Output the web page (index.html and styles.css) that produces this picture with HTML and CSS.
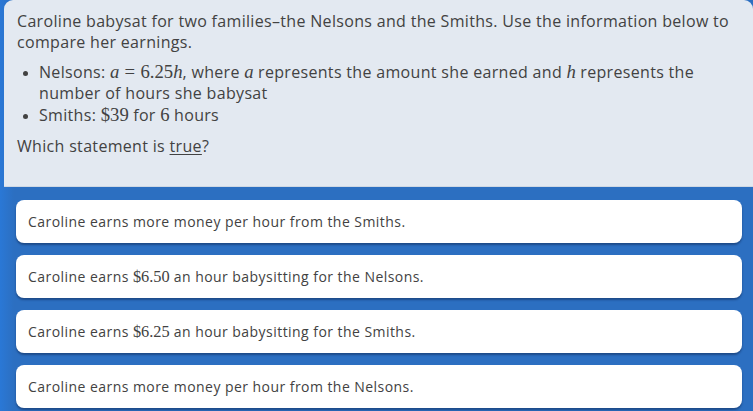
FILE: index.html
```html
<!DOCTYPE html>
<html>
<head>
<meta charset="utf-8">
<link rel="stylesheet" href="styles.css">
</head>
<body>
<div class="page">
  <section class="panel">
    <p class="intro">Caroline babysat for two families–the Nelsons and the Smiths. Use the information below to compare her earnings.</p>
    <ul class="facts">
      <li>Nelsons: <span class="m"><i>a</i><span class="rel">=</span>6.25<i>h</i></span>, where <span class="m"><i>a</i></span> represents the amount she earned and <span class="m"><i>h</i></span> represents the number of hours she babysat</li>
      <li>Smiths: <span class="m">$39</span> for <span class="m">6</span> hours</li>
    </ul>
    <p class="ask">Which statement is <u>true</u>?</p>
  </section>
  <div class="options">
    <button class="opt">Caroline earns more money per hour from the Smiths.</button>
    <button class="opt">Caroline earns <span class="m">$6.50</span> an hour babysitting for the Nelsons.</button>
    <button class="opt">Caroline earns <span class="m">$6.25</span> an hour babysitting for the Smiths.</button>
    <button class="opt">Caroline earns more money per hour from the Nelsons.</button>
  </div>
</div>
</body>
</html>
```

FILE: styles.css
```css
html, body {
  margin: 0;
  padding: 0;
  height: 100%;
  overflow: hidden;
}
body {
  background: linear-gradient(90deg, #2a78d6 0px, #2c6fc1 14px, #2c6fc1 100%);
  font-family: "Open Sans", "Noto Sans", sans-serif;
  color: #424242;
}
.page {
  display: flex;
  flex-direction: column;
}
.panel {
  margin-left: 4px;
  background: #e3e9f1;
  border-radius: 9px 9px 0 0;
  height: 187px;
  box-sizing: border-box;
  padding: 11px 14px 0 13px;
  font-size: 16px;
  letter-spacing: 0.32px;
  line-height: 21px;
  border-bottom: 1px solid #cfd8e4;
}
.intro {
  margin: 0;
}
.facts {
  margin: 9px 0 0 0;
  padding-left: 22px;
}
.facts li {
  margin: 0 0 1px 0;
}
.facts li::marker {
  font-size: 13px;
}
.ask {
  margin: 10px 0 0 0;
}
.ask u {
  text-underline-offset: 2px;
  text-decoration-thickness: 1px;
}
.m {
  font-family: "Liberation Serif", "DejaVu Serif", serif;
  font-size: 1.17em;
  letter-spacing: 0;
  line-height: 1;
}
.m i {
  font-style: italic;
}
.rel {
  margin: 0 0.28em;
}
.options {
  display: flex;
  flex-direction: column;
  gap: 12px;
  padding: 13px 11px 0 16px;
}
.opt {
  display: block;
  height: 43px;
  line-height: 43px;
  border: none;
  border-radius: 8px;
  background: #ffffff;
  box-shadow: 0 2px 2px rgba(10, 30, 70, 0.45);
  padding: 0 12px;
  font-family: "Open Sans", "Noto Sans", sans-serif;
  font-size: 14px;
  letter-spacing: 0.45px;
  color: #424242;
  text-align: left;
  white-space: nowrap;
}
```
